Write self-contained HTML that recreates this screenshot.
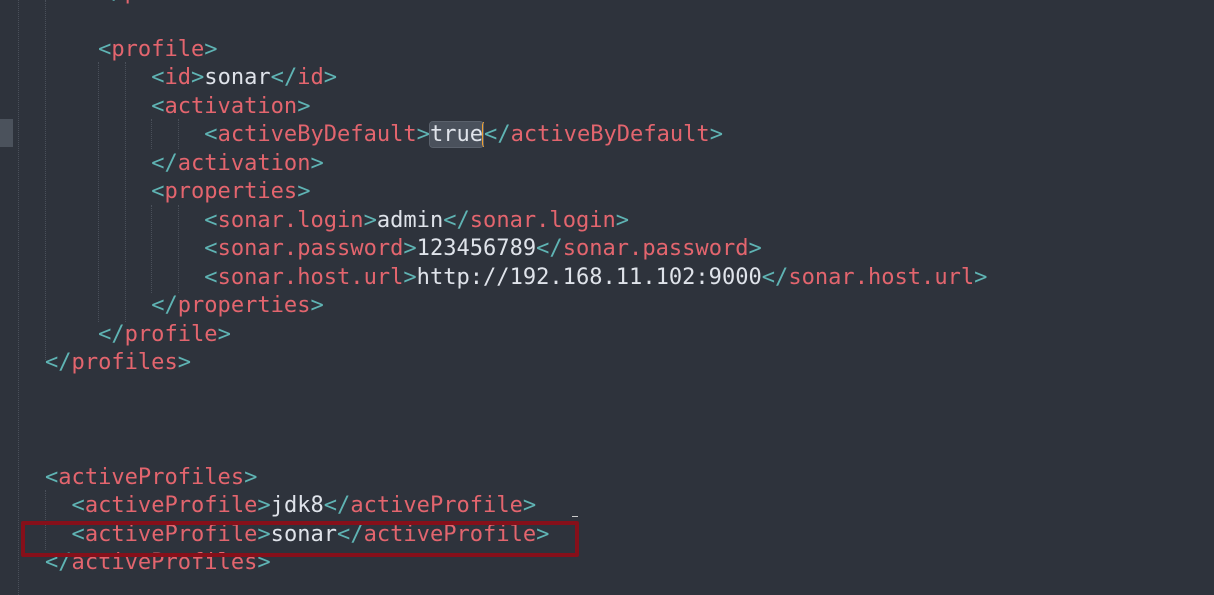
<!DOCTYPE html>
<html><head><meta charset="utf-8"><style>
html,body{margin:0;padding:0;}
body{width:1214px;height:595px;background:#2e333c;position:relative;overflow:hidden;font-family:"DejaVu Sans Mono","Liberation Mono",monospace;font-size:22.05px;}
.l{position:absolute;left:45px;white-space:pre;color:#dfe3ea;height:28px;line-height:28px;margin-top:2px;}
.b{color:#5fb4b4}.t{color:#e3656e}
.g{position:absolute;top:0;height:595px;width:0;border-left:1px dotted #4a505a;}
.sel{background:#4a515c;border-radius:3px;outline:1px solid #5a616c;}
</style></head><body>
<div class="g" style="left:18px"></div>
<div class="g" style="left:45px;top:0;height:360px"></div>
<div class="g" style="left:98px;top:62px;height:260px"></div>
<div class="g" style="left:125px;top:62px;height:260px"></div>
<div class="g" style="left:151px;top:119px;height:30px"></div>
<div class="g" style="left:178px;top:119px;height:30px"></div>
<div class="g" style="left:151px;top:205px;height:88px"></div>
<div class="g" style="left:178px;top:205px;height:88px"></div>
<div class="g" style="left:45px;top:490px;height:60px"></div>
<div style="position:absolute;left:0;top:119px;width:13px;height:28px;background:#4b525c"></div>

<div class="l" style="top:-23px">    <span class="b">&lt;/</span><span class="t">profile</span><span class="b">&gt;</span></div>
<div class="l" style="top:34px">    <span class="b">&lt;</span><span class="t">profile</span><span class="b">&gt;</span></div>
<div class="l" style="top:62px">        <span class="b">&lt;</span><span class="t">id</span><span class="b">&gt;</span>sonar<span class="b">&lt;/</span><span class="t">id</span><span class="b">&gt;</span></div>
<div class="l" style="top:91px">        <span class="b">&lt;</span><span class="t">activation</span><span class="b">&gt;</span></div>
<div class="l" style="top:119px">            <span class="b">&lt;</span><span class="t">activeByDefault</span><span class="b">&gt;</span><span class="sel">true</span><span style="border-left:2px solid #f0a030;margin-left:-1px"></span><span class="b">&lt;/</span><span class="t">activeByDefault</span><span class="b">&gt;</span></div>
<div class="l" style="top:148px">        <span class="b">&lt;/</span><span class="t">activation</span><span class="b">&gt;</span></div>
<div class="l" style="top:176px">        <span class="b">&lt;</span><span class="t">properties</span><span class="b">&gt;</span></div>
<div class="l" style="top:205px">            <span class="b">&lt;</span><span class="t">sonar.login</span><span class="b">&gt;</span>admin<span class="b">&lt;/</span><span class="t">sonar.login</span><span class="b">&gt;</span></div>
<div class="l" style="top:233px">            <span class="b">&lt;</span><span class="t">sonar.password</span><span class="b">&gt;</span>123456789<span class="b">&lt;/</span><span class="t">sonar.password</span><span class="b">&gt;</span></div>
<div class="l" style="top:262px">            <span class="b">&lt;</span><span class="t">sonar.host.url</span><span class="b">&gt;</span>http://192.168.11.102:9000<span class="b">&lt;/</span><span class="t">sonar.host.url</span><span class="b">&gt;</span></div>
<div class="l" style="top:290px">        <span class="b">&lt;/</span><span class="t">properties</span><span class="b">&gt;</span></div>
<div class="l" style="top:319px">    <span class="b">&lt;/</span><span class="t">profile</span><span class="b">&gt;</span></div>
<div class="l" style="top:347px"><span class="b">&lt;/</span><span class="t">profiles</span><span class="b">&gt;</span></div>
<div class="l" style="top:462px"><span class="b">&lt;</span><span class="t">activeProfiles</span><span class="b">&gt;</span></div>
<div class="l" style="top:490px">  <span class="b">&lt;</span><span class="t">activeProfile</span><span class="b">&gt;</span>jdk8<span class="b">&lt;/</span><span class="t">activeProfile</span><span class="b">&gt;</span></div>
<div class="l" style="top:519px">  <span class="b">&lt;</span><span class="t">activeProfile</span><span class="b">&gt;</span>sonar<span class="b">&lt;/</span><span class="t">activeProfile</span><span class="b">&gt;</span></div>
<div class="l" style="top:547px"><span class="b">&lt;/</span><span class="t">activeProfiles</span><span class="b">&gt;</span></div>
<div style="position:absolute;left:572px;top:516px;width:6px;height:1px;background:#ccc"></div>
<div style="position:absolute;left:21px;top:521px;width:550px;height:28px;border:4px solid #86101a;border-radius:2px"></div>
</body></html>
